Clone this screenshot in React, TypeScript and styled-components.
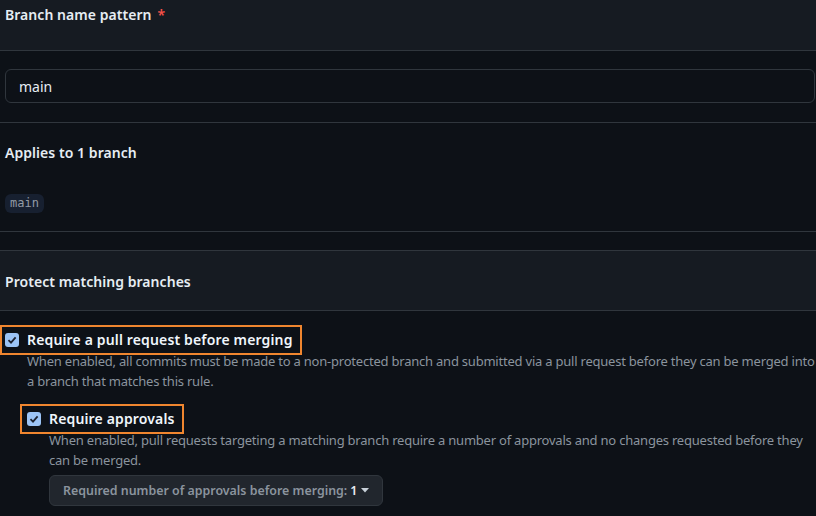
import React from "react";
import styled, { createGlobalStyle } from "styled-components";

const Global = createGlobalStyle`
  html, body { margin: 0; padding: 0; background: #0d1117; }
  body { font-family: "Noto Sans", "Open Sans", sans-serif; color: #e6edf3; }
  * { box-sizing: border-box; }
`;

const Page = styled.div`
  width: 816px;
  height: 516px;
  overflow: hidden;
  background: #0d1117;
`;

const HeaderBar = styled.div<{ $h: number; $pt: number }>`
  height: ${(p) => p.$h}px;
  padding: ${(p) => p.$pt}px 5px 0;
  background: #161b22;
  border-bottom: 1px solid #30363d;
`;

const Title = styled.h3`
  margin: 0;
  font-size: 14px;
  font-weight: 600;
  line-height: 20px;
  color: #e6edf3;
  letter-spacing: 0.05px;
`;

const Required = styled.span`
  color: #f85149;
  margin-left: 6px;
`;

const Section = styled.div<{ $h: number; $pt: number }>`
  height: ${(p) => p.$h}px;
  padding: ${(p) => p.$pt}px 0 0 5px;
  border-bottom: 1px solid #30363d;
  display: flex;
  flex-direction: column;
  align-items: flex-start;
`;

const Input = styled.div`
  width: 810px;
  height: 34px;
  border: 1px solid #30363d;
  border-radius: 6px;
  background: #0d1117;
  padding: 0 13px;
  display: flex;
  align-items: center;
  font-size: 14px;
  color: #e6edf3;
`;

const Code = styled.code`
  margin-top: 31px;
  padding: 1px 5px;
  border-radius: 6px;
  background: #172030;
  font-family: "DejaVu Sans Mono", "Liberation Mono", monospace;
  font-size: 12px;
  line-height: 17px;
  color: #939ba6;
`;

const Spacer = styled.div`
  height: 19px;
  border-bottom: 1px solid #30363d;
`;

const Options = styled.div`
  padding: 14px 0 0 0;
  display: flex;
  flex-direction: column;
`;

const Option = styled.div<{ $indent: number; $mt: number }>`
  padding-left: ${(p) => p.$indent}px;
  margin-top: ${(p) => p.$mt}px;
  display: flex;
  flex-direction: column;
  align-items: flex-start;
`;

const Highlight = styled.div<{ $shift: number }>`
  border: 2px solid #f0862f;
  margin-left: -${(p) => p.$shift}px;
  padding: 3px 7px 3px ${(p) => p.$shift - 2}px;
  display: flex;
  align-items: center;
  gap: 8px;
`;

const Box = styled.span`
  width: 14px;
  height: 14px;
  border-radius: 3px;
  background: #9cc4f6;
  display: inline-flex;
  align-items: center;
  justify-content: center;
`;

const Label = styled.span`
  font-size: 14px;
  font-weight: 600;
  line-height: 20px;
  color: #f0f6fc;
  letter-spacing: 0.15px;
`;

const Desc = styled.p`
  margin: -3px 0 0 22px;
  font-size: 13px;
  line-height: 19.5px;
  letter-spacing: -0.22px;
  color: #8b949e;
  max-width: 792px;
`;

const Select = styled.button`
  margin: 5px 0 0 22px;
  height: 31px;
  padding: 0 13px;
  border: 1px solid #30363d;
  border-radius: 6px;
  background: #21262d;
  color: #8b949e;
  font-family: inherit;
  font-size: 12.4px;
  font-weight: 600;
  display: flex;
  align-items: center;
  gap: 4px;
`;

const Value = styled.span`
  color: #e6edf3;
  margin-left: -1px;
`;

const Check = () => (
  <Box>
    <svg width="10" height="10" viewBox="0 0 10 10">
      <path d="M1.5 5.2 L4 7.6 L8.6 2.4" fill="none" stroke="#1c2230" strokeWidth="1.8" />
    </svg>
  </Box>
);

const Caret = () => (
  <svg width="8" height="5" viewBox="0 0 8 5">
    <path d="M0 0 H8 L4 4.5 Z" fill="#c9d1d9" />
  </svg>
);

export default function App() {
  return (
    <Page>
      <Global />
      <HeaderBar $h={51} $pt={5}>
        <Title>
          Branch name pattern<Required>*</Required>
        </Title>
      </HeaderBar>
      <Section $h={72} $pt={18}>
        <Input>main</Input>
      </Section>
      <Section $h={109} $pt={20}>
        <Title>Applies to 1 branch</Title>
        <Code>main</Code>
      </Section>
      <Spacer />
      <HeaderBar $h={60} $pt={21}>
        <Title>Protect matching branches</Title>
      </HeaderBar>
      <Options>
        <Option $indent={5} $mt={0}>
          <Highlight $shift={5}>
            <Check />
            <Label>Require a pull request before merging</Label>
          </Highlight>
          <Desc>
            When enabled, all commits must be made to a non-protected branch and submitted via a pull
            request before they can be merged into a branch that matches this rule.
          </Desc>
        </Option>
        <Option $indent={27} $mt={13}>
          <Highlight $shift={7}>
            <Check />
            <Label>Require approvals</Label>
          </Highlight>
          <Desc>
            When enabled, pull requests targeting a matching branch require a number of approvals and
            no changes requested before they can be merged.
          </Desc>
          <Select>
            Required number of approvals before merging: <Value>1</Value>
            <Caret />
          </Select>
        </Option>
      </Options>
    </Page>
  );
}
